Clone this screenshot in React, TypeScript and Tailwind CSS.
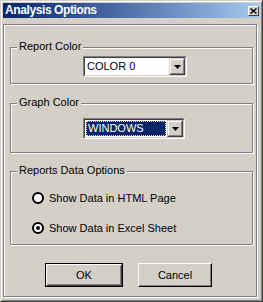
import React from 'react'

// Win2000-style "Analysis Options" dialog

function GroupBox({ label, className, children }: { label: string; className?: string; children?: React.ReactNode }) {
  return (
    <div className={`relative border border-[#808080] shadow-[inset_1px_1px_0_#fff,1px_1px_0_#fff] ${className ?? ''}`}>
      <span className="absolute left-[6px] top-[-9px] bg-[#d4d0c8] px-[2px] text-[11px] leading-[14px] whitespace-nowrap">
        {label}
      </span>
      {children}
    </div>
  )
}

function DropButton() {
  return (
    <div className="w-[16px] h-full border border-t-[#d4d0c8] border-l-[#d4d0c8] border-r-[#404040] border-b-[#404040]">
      <div className="h-full border border-t-white border-l-white border-r-[#808080] border-b-[#808080] bg-[#d4d0c8] flex items-center justify-center">
        <svg width="7" height="4" viewBox="0 0 7 4">
          <path d="M0 0h7L3.5 4z" fill="#000" />
        </svg>
      </div>
    </div>
  )
}

function Combo({ value, focused, className }: { value: string; focused?: boolean; className?: string }) {
  return (
    <div className={`h-[21px] border border-t-[#808080] border-l-[#808080] border-r-white border-b-white ${className ?? ''}`}>
      <div className="h-full border border-t-[#404040] border-l-[#404040] border-r-[#d4d0c8] border-b-[#d4d0c8] bg-white flex">
        {focused ? (
          <div className="flex-1 p-[1px]">
            <div className="h-full bg-[#0a246a] border border-dotted border-[#e8e0a0] text-white text-[11px] leading-[13px] pl-[1px]">
              {value}
            </div>
          </div>
        ) : (
          <div className="flex-1 pl-[2px] text-[11px] leading-[17px]">{value}</div>
        )}
        <DropButton />
      </div>
    </div>
  )
}

function Radio({ checked, label }: { checked?: boolean; label: string }) {
  return (
    <div className="h-[12px] flex items-center gap-[5px]">
      <svg width="12" height="12" viewBox="0 0 12 12">
        <circle cx="6" cy="6" r="5" fill="#fff" stroke="#000" strokeWidth="2" />
        {checked && <circle cx="6" cy="6" r="2" fill="#000" />}
      </svg>
      <span className="text-[11px] leading-[12px] whitespace-nowrap">{label}</span>
    </div>
  )
}

export default function App() {
  return (
    <div className="w-[263px] h-[302px] border border-t-[#d4d0c8] border-l-[#d4d0c8] border-r-[#404040] border-b-[#404040] bg-[#d4d0c8] text-black font-['Liberation_Sans',Arial,sans-serif]">
      <div className="h-full border border-t-white border-l-white border-r-[#808080] border-b-[#808080] p-[1px] flex flex-col">
        {/* title bar */}
        <div className="h-[15px] flex items-center justify-between bg-linear-to-r from-[#0a246a] to-[#a6caf0] pl-[2px] pr-[1px]">
          <span className="text-white font-bold text-[12px] tracking-[-0.4px] leading-[15px]">Analysis Options</span>
          <div className="w-[11px] h-[10px] border border-t-white border-l-white border-r-[#404040] border-b-[#404040] bg-[#d4d0c8] flex items-center justify-center">
            <svg width="7" height="6" viewBox="0 0 7 6">
              <path d="M0.5 0.5l6 5M6.5 0.5l-6 5" stroke="#000" strokeWidth="1.4" />
            </svg>
          </div>
        </div>

        {/* content frame */}
        <div className="mt-[6px] w-[254px] h-[273px] border border-[#808080] shadow-[inset_1px_1px_0_#fff,1px_1px_0_#fff] flex flex-col">
          <GroupBox label="Report Color" className="ml-[6px] mt-[22px] w-[243px] h-[37px]">
            <Combo value="COLOR 0" className="ml-[72px] mt-[8px] w-[104px]" />
          </GroupBox>

          <GroupBox label="Graph Color" className="ml-[6px] mt-[19px] w-[243px] h-[50px]">
            <Combo value="WINDOWS" focused className="ml-[72px] mt-[14px] w-[102px]" />
          </GroupBox>

          <GroupBox label="Reports Data Options" className="ml-[6px] mt-[18px] w-[243px] h-[74px]">
            <div className="ml-[21px] mt-[20px] flex flex-col gap-[18px]">
              <Radio label="Show Data in HTML Page" />
              <Radio checked label="Show Data in Excel Sheet" />
            </div>
          </GroupBox>

          <div className="ml-[41px] mt-[18px] flex items-start gap-[15px]">
            <div className="w-[78px] h-[24px] border border-black">
              <div className="h-full border border-t-white border-l-white border-r-[#404040] border-b-[#404040]">
                <div className="h-full border border-t-[#d4d0c8] border-l-[#d4d0c8] border-r-[#808080] border-b-[#808080] flex items-center justify-center text-[11px]">
                  OK
                </div>
              </div>
            </div>
            <div className="w-[74px] h-[24px] border border-t-white border-l-white border-r-black border-b-black">
              <div className="h-full border border-t-[#d4d0c8] border-l-[#d4d0c8] border-r-[#808080] border-b-[#808080] flex items-center justify-center text-[11px]">
                Cancel
              </div>
            </div>
          </div>
        </div>
      </div>
    </div>
  )
}
